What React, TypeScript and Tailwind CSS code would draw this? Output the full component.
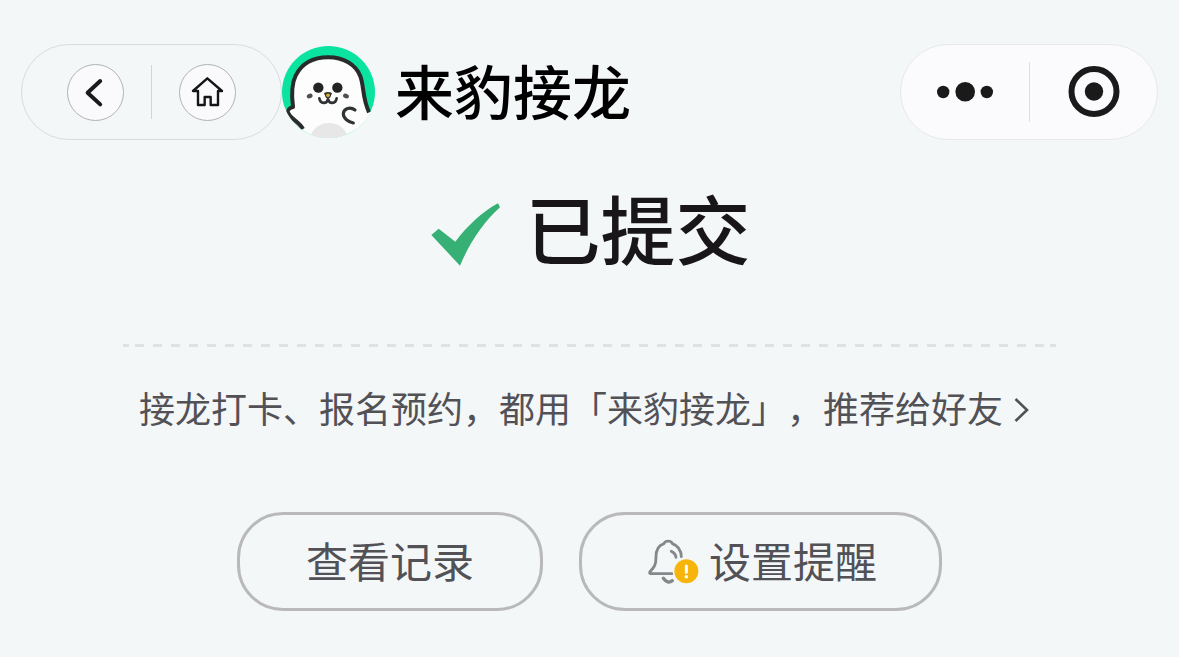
import type { ReactNode } from "react";

function CircleButton({ label, children }: { label: string; children: ReactNode }) {
  return (
    <button
      aria-label={label}
      className="flex size-[57px] items-center justify-center rounded-full border border-[#b2b3b5] bg-[#fafafc]"
    >
      {children}
    </button>
  );
}

function BackIcon() {
  return (
    <svg width="57" height="57" viewBox="0 0 57 57" fill="none" className="shrink-0">
      <path
        d="M33.2 17 L20.6 28.7 L33.2 40.4"
        stroke="#1a1a1a"
        strokeWidth="4"
        strokeLinecap="round"
        strokeLinejoin="round"
      />
    </svg>
  );
}

function HomeIcon() {
  return (
    <svg width="57" height="57" viewBox="507 87 171 171" fill="none" className="shrink-0">
      <path
        d="M592 130 L549 168 H564 V210 H584 V186 H602 V210 H624 V168 H636 Z"
        stroke="#151515"
        strokeWidth="7.2"
        strokeLinejoin="round"
      />
    </svg>
  );
}

function SealAvatar() {
  return (
    <svg width="93" height="92" viewBox="21 23 279 276" fill="none" className="shrink-0">
      <defs>
        <clipPath id="avatar">
          <ellipse cx="160.5" cy="161" rx="139.5" ry="138" />
        </clipPath>
      </defs>
      <g clipPath="url(#avatar)">
        <rect x="21" y="23" width="279" height="276" fill="#0be3a0" />
        {/* Body */}
        <rect x="21" y="212" width="60" height="90" fill="#fdfdfd" />
        <rect x="240" y="222" width="60" height="80" fill="#fdfdfd" />
        <path
          d="M82 272 C70 250 45 240 38 222 C36 214 46 208 54 206 C50 175 48 140 62 112 C82 72 120 57 160 57 C205 57 242 78 256 114 C267 143 262 180 282 222 L310 240 V310 H70 Z"
          fill="#fdfdfd"
        />
        <path
          d="M84 272 C70 248 46 242 39 222 C37 214 46 208 54 206 C50 175 48 140 62 112 C82 72 120 57 160 57 C205 57 242 78 256 114 C267 143 262 180 282 222"
          stroke="#292b2b"
          strokeWidth="12"
          strokeLinejoin="round"
        />
        <ellipse cx="162" cy="306" rx="57" ry="52" fill="#e7e7e7" />
        {/* Eyes and cheeks */}
        <circle cx="130" cy="148" r="15.5" fill="#222424" />
        <circle cx="187" cy="148" r="15.5" fill="#222424" />
        <ellipse cx="104" cy="173" rx="9" ry="7" fill="#4c5051" transform="rotate(-25 104 173)" />
        <ellipse cx="213" cy="173" rx="9" ry="7" fill="#4c5051" transform="rotate(25 213 173)" />
        {/* Nose and mouth */}
        <path
          d="M133 180 C136 198 156 198 159 182 C162 198 182 198 185 180"
          stroke="#303333"
          strokeWidth="8"
          strokeLinecap="round"
        />
        <path d="M147 164 Q159 158 171 164 Q168 178 159 184 Q150 178 147 164 Z" fill="#35342c" />
        <circle cx="159" cy="171" r="5.5" fill="#cfae3e" />
        {/* Flipper */}
        <path
          d="M240 215 C226 204 206 210 205 226 C205 240 220 251 235 254"
          stroke="#303333"
          strokeWidth="9.5"
          strokeLinecap="round"
        />
      </g>
    </svg>
  );
}

function MoreIcon() {
  return (
    <svg width="56" height="20" viewBox="0 0 56 20" fill="#1a1a1a" className="shrink-0">
      <circle cx="6.2" cy="10" r="6.2" />
      <circle cx="28.2" cy="9.8" r="9.8" />
      <circle cx="49.8" cy="10" r="6.2" />
    </svg>
  );
}

function TargetIcon() {
  return (
    <svg width="52" height="52" viewBox="0 0 52 52" fill="none" className="shrink-0">
      <circle cx="26" cy="25.5" r="22.5" stroke="#1a1a1a" strokeWidth="6" />
      <circle cx="26" cy="25.5" r="9.2" fill="#1a1a1a" />
    </svg>
  );
}

function CheckIcon() {
  return (
    <svg width="70" height="64" viewBox="36 54 210 192" className="mt-4 shrink-0">
      <path
        d="M37 150 L59 131 L109 170 C145 123 191 79 237 55 L243 67 C193 112 153 171 123 242 Z"
        fill="#36b074"
      />
    </svg>
  );
}

function ReminderIcon() {
  return (
    <svg width="54" height="48" viewBox="230 98 162 144" fill="none" className="shrink-0">
      <g stroke="#86878a" strokeWidth="8.5" strokeLinecap="round" strokeLinejoin="round">
        <path d="M308 205 H241 Q236 204 239 199 C253 184 257 178 257 155 C257 133 264 120 281 115 C284 105 303 105 306 115 C323 121 332 132 333 154" />
        <path d="M303 138 Q315 143 317 156" />
        <path d="M279 219 Q292 237 306 226" strokeWidth="10" />
      </g>
      <circle cx="348" cy="198" r="41" fill="#f4f7f8" />
      <circle cx="348" cy="198" r="36" fill="#f7b50c" />
      <path d="M348 182 V201" stroke="#fff" strokeWidth="9" strokeLinecap="round" />
      <circle cx="348" cy="214" r="5.2" fill="#fff" />
    </svg>
  );
}

function DashedDivider() {
  return (
    <div className="mx-auto flex h-[3px] w-[933px] justify-between">
      <span className="w-1.5 bg-[#dfe1e2]" />
      <span className="w-[909px] bg-[repeating-linear-gradient(90deg,#dfe1e2_0_9px,transparent_9px_18px)]" />
      <span className="w-1.5 bg-[#dfe1e2]" />
    </div>
  );
}

export default function App() {
  return (
    <div className="h-[657px] w-[1179px] overflow-hidden bg-[#f4f7f8] pt-11 font-['Noto_Sans_CJK_SC',sans-serif] text-[#525156] [text-spacing-trim:space-all]">
      {/* Navigation bar */}
      <header className="flex h-24 items-center pr-[21px] pl-[21px]">
        <div className="flex h-24 w-[261px] items-center rounded-full border border-[#d9dcdd] pl-[45px]">
          <CircleButton label="返回">
            <BackIcon />
          </CircleButton>
          <span className="mr-[27px] ml-[27px] h-[54px] w-px bg-[#d2d5d6]" />
          <CircleButton label="首页">
            <HomeIcon />
          </CircleButton>
        </div>
        <SealAvatar />
        <h1 className="ml-5 pb-1 text-[59px] leading-[90px] font-medium whitespace-nowrap text-black">
          来豹接龙
        </h1>
        <div className="ml-auto flex h-24 w-[258px] items-center rounded-full border border-[#e6e8ea] bg-[#fbfbfd] pl-9">
          <MoreIcon />
          <span className="mr-[38px] ml-9 h-[60px] w-px bg-[#dddfe1]" />
          <TargetIcon />
        </div>
      </header>

      {/* Status */}
      <section className="mt-[37px] flex h-[100px] items-center justify-center pl-[3px]">
        <CheckIcon />
        <h2 className="ml-6 text-[75px] leading-[100px] font-medium text-[#181618]">已提交</h2>
      </section>

      <div className="mt-[67px]">
        <DashedDivider />
      </div>

      <p className="mt-[33px] flex h-[54px] items-center pl-[139px] text-[36px] leading-[54px] whitespace-nowrap">
        接龙打卡、报名预约，都用「来豹接龙」，推荐给好友
        <svg width="18" height="26" viewBox="0 0 18 26" fill="none" className="mt-1.5 ml-[11px] shrink-0">
          <path d="M1.5 2 L13 13 L1.5 24" stroke="#525156" strokeWidth="2.6" />
        </svg>
      </p>

      {/* Actions */}
      <div className="mt-[78px] flex gap-9 pl-[237px] text-[42px] leading-[60px]">
        <button className="flex h-[99px] w-[306px] items-center justify-center rounded-[46px] border-3 border-[#b9b9bb] pb-1">
          查看记录
        </button>
        <button className="flex h-[99px] w-[363px] items-center rounded-[46px] border-3 border-[#b9b9bb] pl-[65px]">
          <ReminderIcon />
          <span className="ml-2 pb-1">设置提醒</span>
        </button>
      </div>
    </div>
  );
}
